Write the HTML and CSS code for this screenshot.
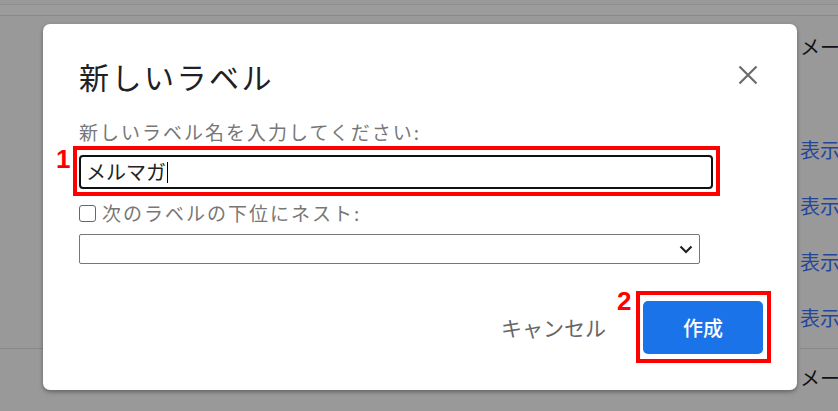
FILE: index.html
```html
<!DOCTYPE html>
<html lang="ja">
<head>
<meta charset="utf-8">
<link rel="stylesheet" href="styles.css">
</head>
<body>
<div class="bg">
  <div class="band1"></div>
  <div class="band2"></div>
  <div class="side">
    <div class="row-mail">メール</div>
    <div class="spacer"></div>
    <div class="row-show">表示する</div>
    <div class="row-show">表示する</div>
    <div class="row-show">表示する</div>
    <div class="row-show last">表示する</div>
    <div class="row-mail2">メール</div>
  </div>
  <div class="line-left"></div>
</div>

<div class="dialog">
  <div class="header">
    <h1 class="title">新しいラベル</h1>
    <svg class="close" width="20" height="20" viewBox="0 0 20 20"><path d="M1.5 1.5 L18.5 18.5 M18.5 1.5 L1.5 18.5" stroke="#6b6b6b" stroke-width="2.2" fill="none"/></svg>
  </div>
  <div class="label">新しいラベル名を入力してください:</div>
  <div class="mark mark1">
    <span class="num num1">1</span>
    <div class="input">メルマガ<span class="caret"></span></div>
  </div>
  <div class="check-row">
    <span class="checkbox"></span>
    <span class="check-label">次のラベルの下位にネスト:</span>
  </div>
  <div class="select">
    <svg class="chev" width="14" height="9" viewBox="0 0 14 9"><path d="M1.5 1.5 L7 7 L12.5 1.5" stroke="#222" stroke-width="2.2" fill="none"/></svg>
  </div>
  <div class="footer">
    <span class="cancel">キャンセル</span>
    <div class="mark mark2">
      <span class="num num2">2</span>
      <div class="btn">作成</div>
    </div>
  </div>
</div>
</body>
</html>
```

FILE: styles.css
```css
html, body {
  margin: 0;
  padding: 0;
}
body {
  background: #999999;
  width: 838px;
  height: 411px;
  overflow: hidden;
  font-family: "Noto Sans CJK JP", "Noto Sans", sans-serif;
  position: relative;
}
.bg {
  height: 411px;
  position: relative;
}
.band1 {
  height: 4px;
  border-bottom: 1px solid #8e8e8e;
}
.band2 {
  height: 10px;
  background: #9c9c9c;
  border-bottom: 1px solid #8a8a8a;
}
.side {
  margin-left: 800px;
  white-space: nowrap;
  overflow: hidden;
}
.row-mail {
  height: 62px;
  line-height: 62px;
  font-size: 20px;
  color: #111;
}
.spacer {
  height: 44px;
}
.row-show {
  height: 56px;
  line-height: 56px;
  font-size: 20px;
  color: #24479a;
}
.row-show.last {
  height: 58px;
  border-bottom: 1px solid #888;
}
.row-mail2 {
  height: 58px;
  line-height: 58px;
  font-size: 20px;
  color: #111;
}
.line-left {
  position: absolute;
  left: 0;
  top: 348px;
  width: 50px;
  border-top: 1px solid #888;
}

.dialog {
  position: absolute;
  left: 43px;
  top: 24px;
  width: 754px;
  height: 366px;
  box-sizing: border-box;
  background: #fff;
  border-radius: 7px;
  box-shadow: 0 2px 4px rgba(0,0,0,0.35);
  padding: 30px 40px 0 36px;
  display: flex;
  flex-direction: column;
}
.header {
  display: flex;
  justify-content: space-between;
  align-items: center;
  height: 44px;
}
.title {
  margin: 0 0 0 0;
  font-size: 30px;
  letter-spacing: 2.5px;
  font-weight: 400;
  color: #202124;
  line-height: 44px;
}
.close {
  margin-right: -1px;
  margin-top: -2px;
}
.label {
  margin-top: 22px;
  margin-left: 0;
  font-size: 19px;
  letter-spacing: 2px;
  line-height: 24px;
  color: #777;
}
.mark {
  position: relative;
  border: 4px solid #ff0000;
  box-sizing: border-box;
}
.mark1 {
  margin-top: 2px;
  margin-left: -6px;
  width: 647px;
  padding: 5px 3px 3px 2px;
}
.num {
  position: absolute;
  font-family: "Liberation Sans", Arial, sans-serif;
  font-weight: 700;
  font-size: 26px;
  color: #ff0000;
  line-height: 1;
}
.num1 {
  left: -21px;
  top: -4px;
}
.input {
  height: 34px;
  box-sizing: border-box;
  border: 2px solid #111;
  border-radius: 4px;
  font-size: 20px;
  line-height: 30px;
  color: #222;
  padding-left: 5px;
  display: flex;
  align-items: center;
}
.caret {
  display: inline-block;
  width: 0;
  height: 21px;
  border-left: 1px solid #000;
  margin-left: 1px;
}
.check-row {
  margin-top: 8px;
  display: flex;
  align-items: center;
  height: 18px;
}
.checkbox {
  width: 17px;
  height: 17px;
  box-sizing: border-box;
  border: 1px solid #666;
  border-radius: 3px;
  background: #fff;
}
.check-label {
  margin-left: 6px;
  font-size: 19px;
  letter-spacing: 2px;
  color: #777;
  line-height: 24px;
}
.select {
  margin-top: 12px;
  width: 621px;
  height: 30px;
  box-sizing: border-box;
  border: 1px solid #777;
  border-radius: 2px;
  display: flex;
  align-items: center;
  justify-content: flex-end;
  padding-right: 6px;
}
.footer {
  margin-top: 27px;
  display: flex;
  align-items: center;
  justify-content: flex-end;
  margin-right: -14px;
}
.cancel {
  font-size: 21px;
  color: #666;
  margin-right: 30px;
  margin-top: 0;
}
.mark2 {
  padding: 6px 4px 5px 3px;
}
.num2 {
  left: -23px;
  top: -7px;
}
.btn {
  width: 120px;
  height: 53px;
  background: #1a73e8;
  border-radius: 5px;
  color: #fff;
  font-size: 20px;
  font-weight: 500;
  display: flex;
  align-items: center;
  justify-content: center;
}
```
